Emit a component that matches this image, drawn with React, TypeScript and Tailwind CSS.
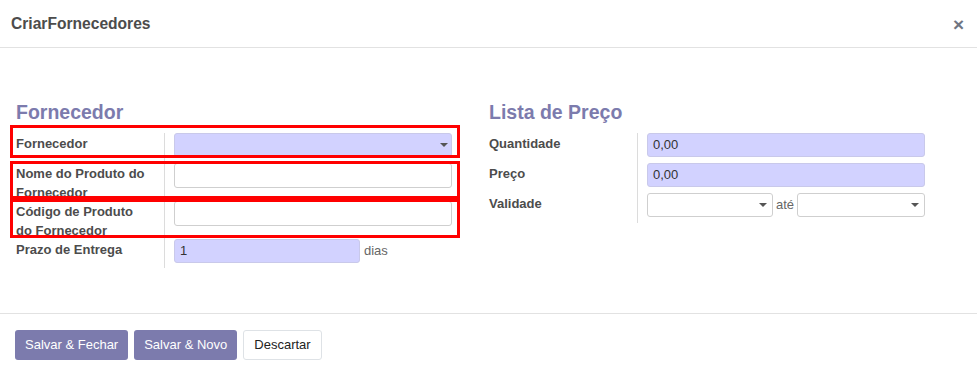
import React from 'react';

const labelCls =
  'w-[149px] shrink-0 border-r border-[#dcdcdc] text-[13px] leading-[19px] font-bold text-[#4c4c4c] pt-[1px]';
const purpleInput =
  'h-[24px] rounded-[3px] border border-[#c9c9ea] bg-[#d2d2ff] px-[5px] text-[13px] leading-[22px] text-[#333]';
const whiteInput = 'h-[25px] rounded-[3px] border border-[#cfcfcf] bg-white';

function Caret() {
  return <span className="block w-0 h-0 border-l-[4px] border-r-[4px] border-t-[4px] border-l-transparent border-r-transparent border-t-[#555]" />;
}

function Row({ label, h, children }: { label: React.ReactNode; h: string; children?: React.ReactNode }) {
  return (
    <div className={`flex ${h}`}>
      <div className={labelCls}>{label}</div>
      <div className="flex-1 pl-[9px]">{children}</div>
    </div>
  );
}

export default function App() {
  return (
    <div className="w-[977px] h-[377px] bg-white font-['Liberation_Sans',Arial,sans-serif] flex flex-col">
      <div className="flex items-center justify-between pl-[11px] pr-[13px] pt-[13px] pb-[12px] border-b border-[#e2e2e2]">
        <h1 className="text-[15.6px] leading-[22px] font-bold text-[#4c4c4c]">CriarFornecedores</h1>
        <span className="text-[19px] leading-none font-bold text-[#6f7582]">×</span>
      </div>

      <div className="h-[265px] pt-[52px] pl-[16px] flex gap-[37px]">
        <div className="w-[436px]">
          <h2 className="text-[19.5px] leading-[24px] font-bold text-[#7c7bad]">Fornecedor</h2>
          <div className="relative mt-[9px]">
            <Row label="Fornecedor" h="h-[30px]">
              <div className="h-[24px] rounded-[3px] border border-[#c9c9ea] bg-[#d2d2ff] flex items-center justify-end pr-[3px]">
                <Caret />
              </div>
            </Row>
            <Row label={<>Nome do Produto do<br />Fornecedor</>} h="h-[38px]">
              <div className={whiteInput} />
            </Row>
            <Row label={<>Código de Produto<br />do Fornecedor</>} h="h-[38px]">
              <div className={whiteInput} />
            </Row>
            <Row label="Prazo de Entrega" h="h-[29px]">
              <div className="flex items-center gap-[4px]">
                <div className={`${purpleInput} w-[186px]`}>1</div>
                <span className="text-[13px] text-[#666]">dias</span>
              </div>
            </Row>

            <div className="absolute top-[-8px] left-[-6px] w-[450px] h-[33px] border-[3px] border-[#ff0000]" />
            <div className="absolute top-[28px] left-[-6px] w-[450px] h-[38px] border-[3px] border-[#ff0000]" />
            <div className="absolute top-[66px] left-[-6px] w-[450px] h-[39px] border-[3px] border-[#ff0000]" />
          </div>
        </div>

        <div className="w-[436px]">
          <h2 className="text-[19.5px] leading-[24px] font-bold text-[#7c7bad]">Lista de Preço</h2>
          <div className="mt-[9px]">
            <Row label="Quantidade" h="h-[30px]">
              <div className={purpleInput}>0,00</div>
            </Row>
            <Row label="Preço" h="h-[30px]">
              <div className={purpleInput}>0,00</div>
            </Row>
            <Row label="Validade" h="h-[30px]">
              <div className="flex items-center">
                <div className="w-[126px] h-[24px] rounded-[3px] border border-[#cfcfcf] flex items-center justify-end pr-[5px]">
                  <Caret />
                </div>
                <span className="text-[13px] text-[#666] px-[3px]">até</span>
                <div className="flex-1 h-[24px] rounded-[3px] border border-[#cfcfcf] flex items-center justify-end pr-[5px]">
                  <Caret />
                </div>
              </div>
            </Row>
          </div>
        </div>
      </div>

      <div className="border-t border-[#e2e2e2] pt-[16px] pl-[15px] flex gap-[6px]">
        <button className="h-[30px] px-[10px] rounded-[3px] bg-[#7c7bad] text-white text-[13px]">Salvar &amp; Fechar</button>
        <button className="h-[30px] px-[10px] rounded-[3px] bg-[#7c7bad] text-white text-[13px]">Salvar &amp; Novo</button>
        <button className="h-[30px] px-[10px] rounded-[3px] bg-white border border-[#dee2e6] text-[#222] text-[13px]">Descartar</button>
      </div>
    </div>
  );
}
